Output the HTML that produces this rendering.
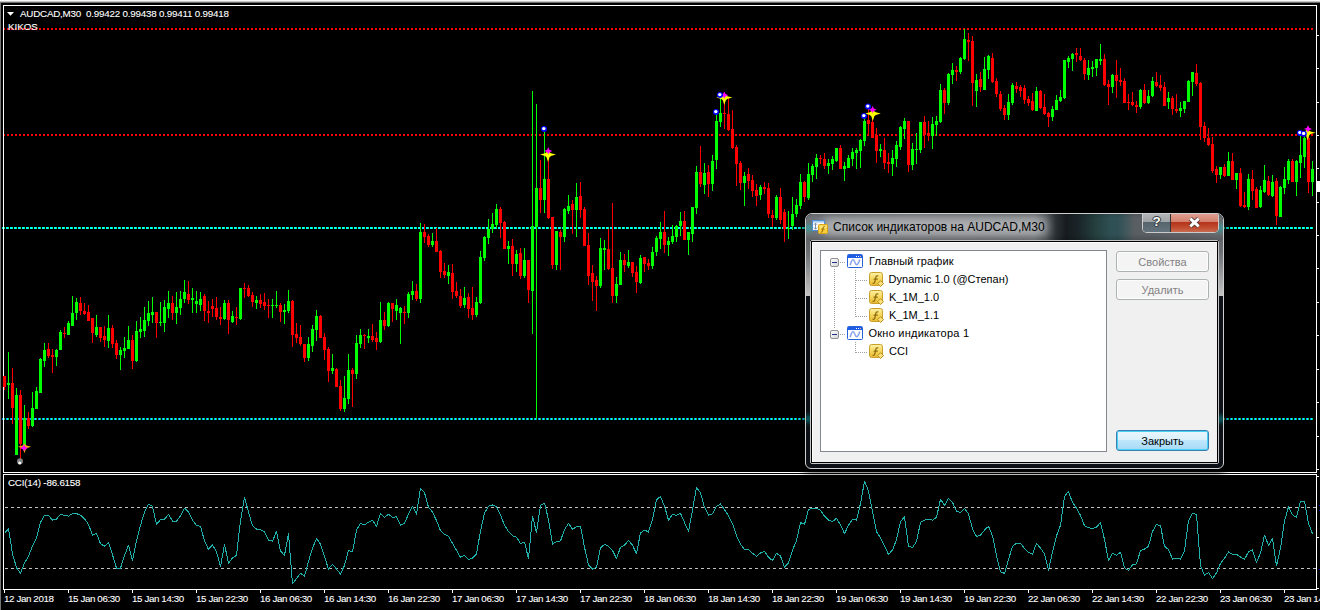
<!DOCTYPE html>
<html><head><meta charset="utf-8"><title>chart</title>
<style>
html,body{margin:0;padding:0;background:#000;}
html{overflow:hidden;width:1320px;height:610px;}
body{width:1320px;height:610px;overflow:hidden;position:relative;font-family:"Liberation Sans",sans-serif;font-size:9.8px;letter-spacing:-0.21px;color:#fff;-webkit-text-stroke:0.1px #fff;}
div{position:absolute;box-sizing:border-box;}
.topbar{left:0;top:0;width:1320px;height:3px;background:linear-gradient(#f6f6f6 0,#f6f6f6 1px,#c4c4c4 1px,#c4c4c4 2px,#6c6c6c 2px,#6c6c6c 3px);}
.leftbar{left:0;top:2px;width:1px;height:608px;background:#747474;}
.frame{border:1px solid #fff;border-right:1px solid #fff;}
.dot{left:2px;width:1311px;height:2px;background-size:4px 2px;background-repeat:repeat-x;}
.dash{left:5px;width:1311px;height:1px;background-image:linear-gradient(90deg,#c0c0c0 0,#c0c0c0 3px,transparent 3px);background-size:6px 1px;}
.tk{top:590px;width:1px;height:3px;background:#fff;}
.tl{top:592.6px;white-space:nowrap;font-size:9.8px;letter-spacing:-0.4px;line-height:12px;color:#fff;}
.rt{left:1317px;width:2px;height:1px;background:#fff;}
.txt{white-space:nowrap;line-height:12px;}
/* dialog */
#dlg{letter-spacing:0;-webkit-text-stroke:0;left:805px;top:213px;width:419px;height:256px;border-radius:7px 7px 6px 6px;background:#0d1117;border:1px solid #cfcfcf;overflow:hidden;box-shadow:0 2px 7px 3px rgba(0,0,0,.6);}
#dlg .glassL,#dlg .glassR{top:26px;width:4px;height:56px;background:linear-gradient(#64686c 0,#6c7074 12px,#c2c2c2 55px);}
#dlg .glassL{left:0} #dlg .glassR{right:0}
#title{left:0;top:0;width:417px;height:26px;overflow:hidden;background:linear-gradient(90deg,#6c7074 0,#74787c 20px,#787c80 120px,#767a7e 228px,#5a5f63 240px,#2a3034 250px,#171b1f 260px,#1a2428 272px,#25403f 290px,#2f5054 305px,#305055 312px,#41585d 320px,#585e62 328px,#5e6266 365px,#686c70 417px);}
#title .glow{left:16px;top:4px;width:226px;height:17px;border-radius:9px;background:rgba(255,255,255,.40);filter:blur(4.5px);}
#title .sh{left:0;top:0;width:417px;height:26px;background:linear-gradient(rgba(0,0,0,.10) 0,rgba(0,0,0,0) 4px,rgba(0,0,0,0) 20px,rgba(0,0,0,.16) 26px);}
.tg{width:9px;height:8px;border-radius:4px;background:rgba(0,215,215,.38);filter:blur(2px);}
#ttext{left:27.1px;top:6px;font-size:12.03px;line-height:14px;color:#000;white-space:nowrap;}
#capbtn{left:336px;top:-1px;width:77px;height:20px;border:1px solid rgba(255,255,255,.75);border-top:0;border-radius:0 0 5px 5px;overflow:hidden;background:#333;}
#capbtn .cq{left:0;top:0;width:27px;height:19px;background:linear-gradient(#b4b6b8 0,#a0a3a6 9px,#56636b 9px,#64747e 19px);}
#capbtn .cq span{position:absolute;left:0;top:1px;width:27px;text-align:center;font-weight:bold;font-size:13.5px;line-height:16px;color:#fff;text-shadow:0 0 1px #2a2e36,0 0 1px #2a2e36,1px 0 0 #3a3e46,-1px 0 0 #3a3e46,0 1px 0 #3a3e46,0 -1px 0 #3a3e46;}
#capbtn .cx{left:28px;top:0;width:47px;height:19px;background:linear-gradient(#e0a294 0,#d4806c 9px,#b4321a 9px,#c0492c 14px,#c86a50 19px);}
#clientO{left:4px;top:26px;width:409px;height:224px;border:1px solid #c4c4c4;border-radius:2px;}
#client{left:5px;top:27px;width:407px;height:222px;background:#f0f0f0;border:1px solid #000;box-shadow:inset 1px 1px 0 #fff;}
#list{left:8px;top:8px;width:287px;height:202px;background:#fff;border:1px solid #828790;}
.btn{left:304px;width:93px;height:21px;border:1px solid #adb2b5;border-radius:3px;background:#f4f4f4;color:#838383;text-align:center;font-size:11px;line-height:20px;padding-top:0px;box-shadow:inset 0 0 0 1px #fcfcfc;}
.btn.def{border-color:#3c7fb1;background:linear-gradient(#eaf6fd 0,#d9f0fc 50%,#bee6fd 50%,#a7d9f5 100%);color:#000;box-shadow:inset 0 0 0 1px #47d1f5;}
.row{height:18px;white-space:nowrap;font-size:11px;line-height:18px;color:#000;}
.ci{position:absolute;overflow:visible;}
.vd{width:1px;background-image:linear-gradient(#a0a0a0 0,#a0a0a0 1px,transparent 1px);background-size:1px 2px;}
.hd{height:1px;background-image:linear-gradient(90deg,#a0a0a0 0,#a0a0a0 1px,transparent 1px);background-size:2px 1px;}
.exp{width:9px;height:9px;border:1px solid #919191;border-radius:2px;background:linear-gradient(135deg,#fff,#d6d6d6);}
.exp i{position:absolute;left:1px;top:3px;width:5px;height:1px;background:#1e3287;}
</style></head><body>
<div class="topbar"></div><div class="leftbar"></div>
<div class="dot" style="top:28px;background-image:linear-gradient(90deg,transparent 0,transparent 1px,#ff0000 1px,#ff0000 3px,transparent 3px);"></div>
<div class="dot" style="top:134px;background-image:linear-gradient(90deg,transparent 0,transparent 1px,#ff0000 1px,#ff0000 3px,transparent 3px);"></div>
<div class="dot" style="top:227px;background-image:linear-gradient(90deg,#00ffff 0,#00ffff 1px,#00ffff 1px,#00ffff 2px,#00ff80 2px,#00ff80 3px,transparent 3px);"></div>
<div class="dot" style="top:418px;background-image:linear-gradient(90deg,#0090ff 0,#0090ff 1px,#00ffff 1px,#00ffff 2px,#00d060 2px,#00d060 3px,transparent 3px);"></div>
<div class="dash" style="top:507px"></div>
<div class="dash" style="top:568px"></div>
<div class="frame" style="left:3px;top:5px;width:1314px;height:468px;"></div>
<div class="frame" style="left:3px;top:474px;width:1314px;height:116px;"></div>
<svg width="1320" height="610" style="position:absolute;left:0;top:0" shape-rendering="crispEdges">
<path fill="#00ff00" d="M8 352h1V399h-1zM7 383h3V385h-3zM16 388h1V455h-1zM15 395h3V455h-3zM24 405h1V446h-1zM23 418h3V446h-3zM32 392h1V427h-1zM31 408h3V426h-3zM36 387h1V409h-1zM35 391h3V409h-3zM40 358h1V393h-1zM39 359h3V393h-3zM44 343h1V367h-1zM43 350h3V361h-3zM56 349h1V366h-1zM55 350h3V357h-3zM60 330h1V350h-1zM59 332h3V350h-3zM68 321h1V335h-1zM67 323h3V335h-3zM72 296h1V326h-1zM71 313h3V326h-3zM76 298h1V320h-1zM75 302h3V313h-3zM96 315h1V337h-1zM95 327h3V335h-3zM108 315h1V348h-1zM107 328h3V341h-3zM120 347h1V370h-1zM119 350h3V355h-3zM124 337h1V358h-1zM123 348h3V351h-3zM128 326h1V349h-1zM127 340h3V349h-3zM136 321h1V362h-1zM135 331h3V361h-3zM140 317h1V338h-1zM139 329h3V332h-3zM144 307h1V337h-1zM143 320h3V331h-3zM148 301h1V326h-1zM147 313h3V321h-3zM152 297h1V323h-1zM151 312h3V315h-3zM160 302h1V326h-1zM159 322h3V323h-3zM164 300h1V332h-1zM163 307h3V323h-3zM168 291h1V318h-1zM167 303h3V309h-3zM176 292h1V324h-1zM175 307h3V313h-3zM180 291h1V315h-1zM179 299h3V308h-3zM184 280h1V303h-1zM183 292h3V299h-3zM192 288h1V313h-1zM191 298h3V300h-3zM196 291h1V313h-1zM195 301h3V304h-3zM200 292h1V311h-1zM199 299h3V305h-3zM224 300h1V320h-1zM223 303h3V319h-3zM232 311h1V323h-1zM231 316h3V322h-3zM240 288h1V320h-1zM239 288h3V319h-3zM256 296h1V309h-1zM255 300h3V303h-3zM272 299h1V318h-1zM271 305h3V306h-3zM276 291h1V308h-1zM275 305h3V306h-3zM284 304h1V324h-1zM283 310h3V312h-3zM288 290h1V313h-1zM287 301h3V311h-3zM308 337h1V361h-1zM307 344h3V358h-3zM312 325h1V352h-1zM311 329h3V346h-3zM316 310h1V341h-1zM315 316h3V330h-3zM332 354h1V374h-1zM331 368h3V371h-3zM344 376h1V412h-1zM343 398h3V409h-3zM348 354h1V404h-1zM347 370h3V399h-3zM356 335h1V379h-1zM355 343h3V374h-3zM360 329h1V348h-1zM359 335h3V344h-3zM368 329h1V343h-1zM367 336h3V338h-3zM380 302h1V343h-1zM379 320h3V342h-3zM388 302h1V327h-1zM387 303h3V326h-3zM396 299h1V320h-1zM395 305h3V311h-3zM400 307h1V344h-1zM399 308h3V313h-3zM408 292h1V318h-1zM407 294h3V313h-3zM412 281h1V300h-1zM411 291h3V295h-3zM420 223h1V303h-1zM419 232h3V299h-3zM432 233h1V247h-1zM431 241h3V245h-3zM448 265h1V284h-1zM447 272h3V276h-3zM464 287h1V308h-1zM463 298h3V305h-3zM476 297h1V317h-1zM475 302h3V315h-3zM480 251h1V304h-1zM479 257h3V303h-3zM484 236h1V261h-1zM483 237h3V258h-3zM488 219h1V244h-1zM487 229h3V238h-3zM492 213h1V233h-1zM491 224h3V229h-3zM496 204h1V228h-1zM495 209h3V225h-3zM508 241h1V264h-1zM507 246h3V249h-3zM516 250h1V272h-1zM515 254h3V264h-3zM524 248h1V278h-1zM523 260h3V276h-3zM532 91h1V334h-1zM531 226h3V291h-3zM536 104h1V418h-1zM535 188h3V227h-3zM544 130h1V213h-1zM543 179h3V200h-3zM556 231h1V270h-1zM555 231h3V265h-3zM564 208h1V242h-1zM563 209h3V237h-3zM568 195h1V214h-1zM567 206h3V211h-3zM576 183h1V237h-1zM575 197h3V210h-3zM600 238h1V288h-1zM599 248h3V286h-3zM604 240h1V270h-1zM603 248h3V250h-3zM616 277h1V303h-1zM615 284h3V296h-3zM620 252h1V285h-1zM619 260h3V285h-3zM628 250h1V268h-1zM627 262h3V266h-3zM640 255h1V284h-1zM639 258h3V283h-3zM652 247h1V269h-1zM651 252h3V266h-3zM656 236h1V256h-1zM655 238h3V252h-3zM660 222h1V249h-1zM659 232h3V239h-3zM668 237h1V256h-1zM667 241h3V245h-3zM672 225h1V244h-1zM671 236h3V242h-3zM676 225h1V242h-1zM675 226h3V237h-3zM680 212h1V236h-1zM679 221h3V226h-3zM688 232h1V255h-1zM687 232h3V240h-3zM692 207h1V242h-1zM691 207h3V234h-3zM696 166h1V214h-1zM695 172h3V208h-3zM704 163h1V194h-1zM703 173h3V185h-3zM712 155h1V191h-1zM711 161h3V184h-3zM716 112h1V169h-1zM715 121h3V160h-3zM720 95h1V127h-1zM719 113h3V122h-3zM744 172h1V206h-1zM743 176h3V183h-3zM760 185h1V200h-1zM759 187h3V195h-3zM776 195h1V220h-1zM775 197h3V218h-3zM788 211h1V239h-1zM787 228h3V229h-3zM792 197h1V230h-1zM791 214h3V226h-3zM796 199h1V217h-1zM795 205h3V214h-3zM800 174h1V209h-1zM799 182h3V206h-3zM808 163h1V200h-1zM807 174h3V198h-3zM812 164h1V182h-1zM811 166h3V175h-3zM816 154h1V179h-1zM815 158h3V167h-3zM828 159h1V174h-1zM827 163h3V166h-3zM832 156h1V170h-1zM831 159h3V164h-3zM836 148h1V162h-1zM835 148h3V161h-3zM844 162h1V181h-1zM843 166h3V169h-3zM848 155h1V168h-1zM847 158h3V168h-3zM852 148h1V166h-1zM851 152h3V159h-3zM856 148h1V169h-1zM855 150h3V153h-3zM860 139h1V168h-1zM859 140h3V151h-3zM864 118h1V146h-1zM863 121h3V141h-3zM880 144h1V157h-1zM879 149h3V151h-3zM892 150h1V176h-1zM891 158h3V164h-3zM896 141h1V167h-1zM895 145h3V159h-3zM900 126h1V150h-1zM899 127h3V147h-3zM904 118h1V139h-1zM903 121h3V129h-3zM912 143h1V170h-1zM911 149h3V165h-3zM916 133h1V164h-1zM915 149h3V150h-3zM920 122h1V153h-1zM919 122h3V150h-3zM932 117h1V149h-1zM931 124h3V136h-3zM936 116h1V136h-1zM935 121h3V125h-3zM940 84h1V123h-1zM939 90h3V122h-3zM948 73h1V105h-1zM947 74h3V103h-3zM952 63h1V84h-1zM951 70h3V75h-3zM960 57h1V74h-1zM959 58h3V72h-3zM964 29h1V60h-1zM963 39h3V59h-3zM976 74h1V107h-1zM975 80h3V91h-3zM984 57h1V90h-1zM983 69h3V90h-3zM988 55h1V79h-1zM987 56h3V70h-3zM1008 94h1V120h-1zM1007 102h3V115h-3zM1012 83h1V105h-1zM1011 85h3V103h-3zM1036 87h1V111h-1zM1035 91h3V111h-3zM1052 106h1V121h-1zM1051 109h3V117h-3zM1056 95h1V110h-1zM1055 100h3V110h-3zM1060 90h1V102h-1zM1059 97h3V101h-3zM1064 60h1V99h-1zM1063 60h3V98h-3zM1068 56h1V68h-1zM1067 58h3V62h-3zM1072 53h1V71h-1zM1071 54h3V59h-3zM1088 60h1V80h-1zM1087 68h3V75h-3zM1092 61h1V77h-1zM1091 67h3V69h-3zM1096 59h1V76h-1zM1095 59h3V68h-3zM1100 44h1V65h-1zM1099 59h3V61h-3zM1112 74h1V93h-1zM1111 75h3V87h-3zM1140 89h1V109h-1zM1139 90h3V107h-3zM1148 90h1V104h-1zM1147 96h3V103h-3zM1152 77h1V97h-1zM1151 81h3V96h-3zM1168 92h1V109h-1zM1167 98h3V102h-3zM1180 102h1V117h-1zM1179 108h3V111h-3zM1184 101h1V113h-1zM1183 101h3V109h-3zM1188 80h1V102h-1zM1187 81h3V102h-3zM1192 72h1V96h-1zM1191 72h3V82h-3zM1220 167h1V179h-1zM1219 167h3V175h-3zM1228 152h1V176h-1zM1227 161h3V176h-3zM1236 173h1V189h-1zM1235 173h3V180h-3zM1248 174h1V210h-1zM1247 179h3V207h-3zM1260 186h1V208h-1zM1259 190h3V207h-3zM1264 165h1V193h-1zM1263 180h3V192h-3zM1272 175h1V197h-1zM1271 182h3V196h-3zM1280 186h1V217h-1zM1279 187h3V217h-3zM1284 167h1V194h-1zM1283 179h3V188h-3zM1288 159h1V184h-1zM1287 161h3V180h-3zM1296 160h1V196h-1zM1295 161h3V182h-3zM1300 136h1V178h-1zM1299 155h3V163h-3zM1304 133h1V168h-1zM1303 138h3V157h-3zM1312 161h1V196h-1zM1311 169h3V182h-3z"/>
<path fill="#ff0000" d="M4 376h1V390h-1zM3 376h3V387h-3zM12 368h1V424h-1zM11 383h3V408h-3zM20 390h1V462h-1zM19 395h3V444h-3zM28 412h1V429h-1zM27 418h3V426h-3zM48 343h1V358h-1zM47 349h3V356h-3zM52 349h1V373h-1zM51 355h3V357h-3zM64 327h1V338h-1zM63 333h3V334h-3zM80 297h1V315h-1zM79 303h3V311h-3zM84 303h1V315h-1zM83 311h3V314h-3zM88 305h1V321h-1zM87 312h3V321h-3zM92 318h1V343h-1zM91 318h3V333h-3zM100 327h1V342h-1zM99 327h3V338h-3zM104 326h1V347h-1zM103 336h3V340h-3zM112 325h1V348h-1zM111 328h3V344h-3zM116 340h1V359h-1zM115 343h3V355h-3zM132 335h1V369h-1zM131 340h3V361h-3zM156 312h1V338h-1zM155 312h3V323h-3zM172 296h1V320h-1zM171 303h3V313h-3zM188 281h1V304h-1zM187 294h3V300h-3zM204 294h1V321h-1zM203 296h3V311h-3zM208 301h1V323h-1zM207 311h3V313h-3zM212 299h1V317h-1zM211 306h3V309h-3zM216 297h1V320h-1zM215 308h3V317h-3zM220 307h1V325h-1zM219 317h3V319h-3zM228 300h1V334h-1zM227 303h3V320h-3zM236 307h1V325h-1zM235 317h3V318h-3zM244 283h1V298h-1zM243 288h3V289h-3zM248 285h1V297h-1zM247 288h3V296h-3zM252 292h1V307h-1zM251 295h3V302h-3zM260 294h1V308h-1zM259 300h3V304h-3zM264 293h1V310h-1zM263 302h3V306h-3zM268 299h1V318h-1zM267 305h3V306h-3zM280 303h1V322h-1zM279 305h3V312h-3zM292 300h1V347h-1zM291 301h3V335h-3zM296 323h1V343h-1zM295 334h3V338h-3zM300 325h1V346h-1zM299 337h3V344h-3zM304 344h1V362h-1zM303 344h3V358h-3zM320 315h1V338h-1zM319 316h3V338h-3zM324 333h1V360h-1zM323 337h3V350h-3zM328 347h1V382h-1zM327 349h3V371h-3zM336 368h1V387h-1zM335 369h3V387h-3zM340 380h1V411h-1zM339 386h3V409h-3zM352 368h1V407h-1zM351 370h3V374h-3zM364 334h1V349h-1zM363 335h3V336h-3zM372 324h1V342h-1zM371 336h3V340h-3zM376 332h1V350h-1zM375 338h3V342h-3zM384 312h1V330h-1zM383 320h3V326h-3zM392 303h1V322h-1zM391 303h3V309h-3zM404 306h1V324h-1zM403 312h3V313h-3zM416 284h1V301h-1zM415 291h3V299h-3zM424 224h1V243h-1zM423 232h3V237h-3zM428 234h1V247h-1zM427 236h3V245h-3zM436 228h1V252h-1zM435 241h3V252h-3zM440 250h1V278h-1zM439 251h3V272h-3zM444 263h1V278h-1zM443 271h3V275h-3zM452 264h1V299h-1zM451 273h3V292h-3zM456 282h1V298h-1zM455 291h3V296h-3zM460 289h1V308h-1zM459 296h3V306h-3zM468 293h1V318h-1zM467 297h3V309h-3zM472 287h1V320h-1zM471 308h3V315h-3zM500 207h1V238h-1zM499 209h3V223h-3zM504 221h1V249h-1zM503 222h3V249h-3zM512 239h1V276h-1zM511 246h3V264h-3zM520 248h1V279h-1zM519 253h3V276h-3zM528 260h1V303h-1zM527 260h3V290h-3zM540 160h1V213h-1zM539 188h3V200h-3zM548 157h1V219h-1zM547 179h3V218h-3zM552 217h1V269h-1zM551 217h3V265h-3zM560 230h1V270h-1zM559 232h3V237h-3zM572 200h1V234h-1zM571 204h3V210h-3zM580 182h1V218h-1zM579 196h3V210h-3zM584 207h1V246h-1zM583 209h3V246h-3zM588 233h1V285h-1zM587 245h3V276h-3zM592 265h1V301h-1zM591 273h3V282h-3zM596 276h1V311h-1zM595 280h3V286h-3zM608 229h1V270h-1zM607 249h3V269h-3zM612 203h1V303h-1zM611 268h3V296h-3zM624 254h1V272h-1zM623 260h3V265h-3zM632 262h1V277h-1zM631 262h3V273h-3zM636 266h1V293h-1zM635 272h3V282h-3zM644 257h1V272h-1zM643 257h3V264h-3zM648 259h1V270h-1zM647 263h3V266h-3zM664 211h1V253h-1zM663 232h3V245h-3zM684 211h1V240h-1zM683 221h3V240h-3zM700 146h1V187h-1zM699 172h3V184h-3zM708 165h1V197h-1zM707 172h3V184h-3zM724 97h1V129h-1zM723 113h3V114h-3zM728 97h1V131h-1zM727 114h3V130h-3zM732 110h1V149h-1zM731 129h3V148h-3zM736 145h1V186h-1zM735 147h3V164h-3zM740 161h1V190h-1zM739 163h3V183h-3zM748 168h1V189h-1zM747 174h3V181h-3zM752 175h1V197h-1zM751 180h3V191h-3zM756 184h1V206h-1zM755 190h3V196h-3zM764 182h1V194h-1zM763 187h3V189h-3zM768 183h1V218h-1zM767 188h3V214h-3zM772 210h1V227h-1zM771 215h3V218h-3zM780 188h1V224h-1zM779 197h3V220h-3zM784 209h1V242h-1zM783 212h3V229h-3zM804 181h1V202h-1zM803 182h3V197h-3zM820 155h1V164h-1zM819 158h3V159h-3zM824 153h1V169h-1zM823 159h3V166h-3zM840 145h1V169h-1zM839 148h3V169h-3zM868 107h1V136h-1zM867 120h3V124h-3zM872 113h1V138h-1zM871 122h3V138h-3zM876 128h1V163h-1zM875 135h3V151h-3zM884 138h1V169h-1zM883 150h3V163h-3zM888 153h1V173h-1zM887 162h3V164h-3zM908 121h1V172h-1zM907 121h3V165h-3zM924 116h1V148h-1zM923 122h3V135h-3zM928 121h1V141h-1zM927 133h3V136h-3zM944 88h1V114h-1zM943 90h3V103h-3zM956 66h1V81h-1zM955 70h3V72h-3zM968 33h1V61h-1zM967 40h3V42h-3zM972 36h1V106h-1zM971 41h3V83h-3zM980 72h1V92h-1zM979 79h3V87h-3zM992 53h1V83h-1zM991 58h3V82h-3zM996 78h1V97h-1zM995 81h3V94h-3zM1000 91h1V111h-1zM999 94h3V109h-3zM1004 105h1V120h-1zM1003 108h3V115h-3zM1016 82h1V93h-1zM1015 86h3V89h-3zM1020 85h1V97h-1zM1019 87h3V91h-3zM1024 85h1V104h-1zM1023 88h3V100h-3zM1028 96h1V106h-1zM1027 99h3V103h-3zM1032 93h1V111h-1zM1031 101h3V110h-3zM1040 90h1V109h-1zM1039 91h3V108h-3zM1044 94h1V115h-1zM1043 107h3V114h-3zM1048 112h1V127h-1zM1047 113h3V117h-3zM1076 48h1V62h-1zM1075 53h3V55h-3zM1080 48h1V61h-1zM1079 56h3V60h-3zM1084 58h1V80h-1zM1083 60h3V74h-3zM1104 54h1V86h-1zM1103 59h3V85h-3zM1108 80h1V105h-1zM1107 84h3V87h-3zM1116 60h1V98h-1zM1115 75h3V81h-3zM1120 68h1V86h-1zM1119 80h3V82h-3zM1124 78h1V103h-1zM1123 81h3V103h-3zM1128 94h1V110h-1zM1127 102h3V103h-3zM1132 92h1V106h-1zM1131 102h3V105h-3zM1136 101h1V113h-1zM1135 105h3V107h-3zM1144 84h1V104h-1zM1143 90h3V103h-3zM1156 72h1V87h-1zM1155 82h3V86h-3zM1160 75h1V91h-1zM1159 85h3V88h-3zM1164 82h1V106h-1zM1163 87h3V106h-3zM1172 96h1V115h-1zM1171 98h3V109h-3zM1176 94h1V113h-1zM1175 109h3V111h-3zM1196 64h1V86h-1zM1195 73h3V84h-3zM1200 82h1V140h-1zM1199 83h3V127h-3zM1204 122h1V142h-1zM1203 126h3V138h-3zM1208 128h1V146h-1zM1207 138h3V145h-3zM1212 137h1V173h-1zM1211 144h3V171h-3zM1216 166h1V183h-1zM1215 169h3V175h-3zM1224 164h1V177h-1zM1223 167h3V176h-3zM1232 153h1V180h-1zM1231 161h3V180h-3zM1240 168h1V207h-1zM1239 173h3V206h-3zM1244 192h1V208h-1zM1243 205h3V207h-3zM1252 170h1V200h-1zM1251 179h3V191h-3zM1256 187h1V208h-1zM1255 189h3V208h-3zM1268 176h1V196h-1zM1267 181h3V195h-3zM1276 178h1V225h-1zM1275 181h3V216h-3zM1292 159h1V182h-1zM1291 161h3V182h-3zM1308 131h1V193h-1zM1307 138h3V182h-3z"/>
</svg>
<svg width="1320" height="610" style="position:absolute;left:0;top:0">
<polyline fill="none" stroke="#20b2aa" stroke-width="1" shape-rendering="crispEdges" stroke-linejoin="round" points="4.5,533.3 8.5,528.6 12.5,553.8 16.5,567.7 20.5,573.2 24.5,563.0 28.5,556.1 32.5,546.2 36.5,538.3 40.5,522.5 44.5,515.4 48.5,515.4 52.5,520.2 56.5,519.1 60.5,514.3 64.5,515.3 68.5,516.2 72.5,513.5 76.5,513.5 80.5,515.3 84.5,518.7 88.5,524.4 92.5,535.2 96.5,533.5 100.5,543.8 104.5,546.2 108.5,542.4 112.5,554.8 116.5,568.1 120.5,568.1 124.5,555.7 128.5,545.3 132.5,560.5 136.5,540.9 140.5,525.3 144.5,512.0 148.5,504.4 152.5,506.3 156.5,524.4 160.5,519.6 164.5,519.2 168.5,514.3 172.5,521.1 176.5,521.1 180.5,515.8 184.5,508.2 188.5,512.0 192.5,520.2 196.5,525.7 200.5,526.3 204.5,540.9 208.5,549.5 212.5,544.7 216.5,551.9 220.5,566.6 224.5,544.3 228.5,563.4 232.5,557.7 236.5,555.4 240.5,520.6 244.5,497.2 248.5,512.0 252.5,525.7 256.5,529.1 260.5,529.5 264.5,532.0 268.5,540.2 272.5,541.1 276.5,531.4 280.5,551.0 284.5,555.4 288.5,533.5 292.5,583.7 296.5,578.6 300.5,573.2 304.5,576.3 308.5,561.5 312.5,548.1 316.5,538.6 320.5,544.0 324.5,556.7 328.5,569.1 332.5,564.3 336.5,569.1 340.5,574.2 344.5,565.3 348.5,550.4 352.5,551.9 356.5,530.1 360.5,523.4 364.5,525.0 368.5,522.1 372.5,520.2 376.5,526.3 380.5,513.4 384.5,517.3 388.5,514.3 392.5,517.3 396.5,516.8 400.5,525.3 404.5,523.0 408.5,514.3 412.5,506.3 416.5,514.3 420.5,488.3 424.5,492.6 428.5,507.3 432.5,512.0 436.5,520.6 440.5,530.7 444.5,534.5 448.5,536.2 452.5,543.4 456.5,550.4 460.5,557.3 464.5,555.4 468.5,559.6 472.5,558.2 476.5,553.8 480.5,531.0 484.5,513.0 488.5,506.3 492.5,505.0 496.5,506.7 500.5,514.9 504.5,525.3 508.5,531.4 512.5,535.8 516.5,537.3 520.5,543.4 524.5,542.1 528.5,558.6 532.5,516.2 536.5,532.4 540.5,505.4 544.5,503.1 548.5,519.6 552.5,544.3 556.5,541.5 560.5,540.9 564.5,529.5 568.5,523.4 572.5,529.1 576.5,526.9 580.5,526.3 584.5,547.2 588.5,564.9 592.5,569.1 596.5,567.2 600.5,548.1 604.5,544.3 608.5,546.2 612.5,550.4 616.5,558.6 620.5,547.2 624.5,545.3 628.5,540.2 632.5,545.3 636.5,553.5 640.5,532.9 644.5,530.1 648.5,532.0 652.5,519.6 656.5,499.7 660.5,496.4 664.5,506.3 668.5,520.2 672.5,514.3 676.5,515.3 680.5,513.4 684.5,522.5 688.5,531.4 692.5,510.1 696.5,487.3 700.5,493.0 704.5,507.3 708.5,515.3 712.5,513.9 716.5,506.3 720.5,504.0 724.5,509.6 728.5,515.8 732.5,523.8 736.5,535.8 740.5,544.0 744.5,549.5 748.5,549.7 752.5,553.3 756.5,556.3 760.5,552.9 764.5,551.4 768.5,557.3 772.5,560.5 776.5,553.3 780.5,556.1 784.5,567.2 788.5,563.0 792.5,550.0 796.5,540.5 800.5,522.5 804.5,524.4 808.5,509.6 812.5,508.2 816.5,508.2 820.5,510.1 824.5,516.2 828.5,520.2 832.5,521.5 836.5,518.3 840.5,525.0 844.5,533.5 848.5,525.3 852.5,519.2 856.5,520.2 860.5,503.5 864.5,481.2 868.5,491.1 872.5,511.1 876.5,531.6 880.5,537.7 884.5,546.2 888.5,554.4 892.5,550.0 896.5,539.6 900.5,521.5 904.5,516.8 908.5,546.2 912.5,547.6 916.5,541.5 920.5,522.5 924.5,520.2 928.5,519.2 932.5,520.2 936.5,517.3 940.5,499.3 944.5,505.4 948.5,498.3 952.5,502.5 956.5,511.1 960.5,512.6 964.5,508.2 968.5,513.9 972.5,529.1 976.5,536.4 980.5,535.2 984.5,530.1 988.5,526.3 992.5,535.8 996.5,555.7 1000.5,571.9 1004.5,573.4 1008.5,559.6 1012.5,546.2 1016.5,543.4 1020.5,543.4 1024.5,548.5 1028.5,552.3 1032.5,554.2 1036.5,543.4 1040.5,548.1 1044.5,553.8 1048.5,570.4 1052.5,551.9 1056.5,535.8 1060.5,525.3 1064.5,496.4 1068.5,491.5 1072.5,502.5 1076.5,508.2 1080.5,515.3 1084.5,525.7 1088.5,527.6 1092.5,528.6 1096.5,527.2 1100.5,522.5 1104.5,539.6 1108.5,560.5 1112.5,553.3 1116.5,555.4 1120.5,552.3 1124.5,567.7 1128.5,570.6 1132.5,564.7 1136.5,563.9 1140.5,550.6 1144.5,549.1 1148.5,546.2 1152.5,531.4 1156.5,524.4 1160.5,525.7 1164.5,546.2 1168.5,549.5 1172.5,559.2 1176.5,558.2 1180.5,559.2 1184.5,551.0 1188.5,520.6 1192.5,513.4 1196.5,514.3 1200.5,565.6 1204.5,575.3 1208.5,572.5 1212.5,578.6 1216.5,572.9 1220.5,563.4 1224.5,558.2 1228.5,551.9 1232.5,554.4 1236.5,554.4 1240.5,557.1 1244.5,559.2 1248.5,551.9 1252.5,550.0 1256.5,562.4 1260.5,552.9 1264.5,535.2 1268.5,545.3 1272.5,538.6 1276.5,565.8 1280.5,548.1 1284.5,521.1 1288.5,506.7 1292.5,514.9 1296.5,517.3 1300.5,501.0 1304.5,501.0 1308.5,523.6 1312.5,533.7"/>
<polygon fill="#ffff00" points="540.0,154.5 545.0,153.3 546.5,152.3 548.0,150.5 549.5,152.3 551.0,153.3 556.0,154.5 551.0,155.9 549.5,157.3 548.0,162.0 546.5,157.3 545.0,155.9"/><polygon fill="#ff00ff" points="544.3,151.0 547.1,149.8 548.3,147.2 549.5,149.8 552.3,151.0 549.5,152.2 548.3,154.2 547.1,152.2"/><circle cx="544" cy="129" r="3" fill="#0000ff"/><circle cx="543.8" cy="128.6" r="1.7" fill="#ffffff"/><polygon fill="#ffff00" points="716.3,97.5 721.3,96.3 722.8,95.3 724.3,93.5 725.8,95.3 727.3,96.3 732.3,97.5 727.3,98.9 725.8,100.3 724.3,105.0 722.8,100.3 721.3,98.9"/><polygon fill="#ff00ff" points="720.3,95.2 723.1,94.0 724.3,91.4 725.5,94.0 728.3,95.2 725.5,96.4 724.3,98.4 723.1,96.4"/><circle cx="716" cy="112" r="3" fill="#0000ff"/><circle cx="715.8" cy="111.6" r="1.7" fill="#ffffff"/><circle cx="720" cy="95" r="3" fill="#0000ff"/><circle cx="719.8" cy="94.6" r="1.7" fill="#ffffff"/><polygon fill="#ffff00" points="864.8,113.5 869.8,112.3 871.3,111.3 872.8,109.5 874.3,111.3 875.8,112.3 880.8,113.5 875.8,114.9 874.3,116.3 872.8,121.0 871.3,116.3 869.8,114.9"/><polygon fill="#ff00ff" points="868.6,109.8 871.4,108.6 872.6,106.0 873.8,108.6 876.6,109.8 873.8,111.0 872.6,113.0 871.4,111.0"/><circle cx="864" cy="116" r="3" fill="#0000ff"/><circle cx="863.8" cy="115.6" r="1.7" fill="#ffffff"/><circle cx="868" cy="106.5" r="3" fill="#0000ff"/><circle cx="867.8" cy="106.1" r="1.7" fill="#ffffff"/><polygon fill="#ffff00" points="1299.6,132.7 1304.6,131.5 1306.1,130.5 1307.6,128.7 1309.1,130.5 1310.6,131.5 1315.6,132.7 1310.6,134.1 1309.1,135.5 1307.6,140.2 1306.1,135.5 1304.6,134.1"/><polygon fill="#ff00ff" points="1304.0,129.0 1306.8,127.8 1308.0,125.2 1309.2,127.8 1312.0,129.0 1309.2,130.2 1308.0,132.2 1306.8,130.2"/><circle cx="1300" cy="133" r="3" fill="#0000ff"/><circle cx="1299.8" cy="132.6" r="1.7" fill="#ffffff"/><circle cx="1303.8" cy="133.8" r="3" fill="#0000ff"/><circle cx="1303.6" cy="133.4" r="1.7" fill="#ffffff"/><polygon fill="#ffa500" points="17.7,446.8 21.9,445.8 23.2,444.9 24.5,443.4 25.8,444.9 27.1,445.8 31.3,446.8 27.1,448.0 25.8,449.2 24.5,453.2 23.2,449.2 21.9,448.0"/><polygon fill="#ff00ff" points="20.0,448.0 22.8,446.8 24.0,444.2 25.2,446.8 28.0,448.0 25.2,449.2 24.0,451.2 22.8,449.2"/><circle cx="20" cy="461.3" r="3" fill="#808080"/><circle cx="19.7" cy="463" r="1.6" fill="#ffffff"/>
<polygon fill="#fff" points="7,12 14,12 10.5,15.8"/>
</svg>
<div class="txt" style="left:20px;top:7.8px;">AUDCAD,M30&nbsp; 0.99422 0.99438 0.99411 0.99418</div>
<div class="txt" style="left:8px;top:20.6px;letter-spacing:-0.05px;">KIKOS</div>
<div class="txt" style="left:8px;top:477.4px;">CCI(14) -86.6158</div>
<div class="tk" style="left:4px"></div><div class="tl" style="left:4px">12 Jan 2018</div><div class="tk" style="left:68px"></div><div class="tl" style="left:68px">15 Jan 06:30</div><div class="tk" style="left:132px"></div><div class="tl" style="left:132px">15 Jan 14:30</div><div class="tk" style="left:196px"></div><div class="tl" style="left:196px">15 Jan 22:30</div><div class="tk" style="left:260px"></div><div class="tl" style="left:260px">16 Jan 06:30</div><div class="tk" style="left:324px"></div><div class="tl" style="left:324px">16 Jan 14:30</div><div class="tk" style="left:388px"></div><div class="tl" style="left:388px">16 Jan 22:30</div><div class="tk" style="left:452px"></div><div class="tl" style="left:452px">17 Jan 06:30</div><div class="tk" style="left:516px"></div><div class="tl" style="left:516px">17 Jan 14:30</div><div class="tk" style="left:580px"></div><div class="tl" style="left:580px">17 Jan 22:30</div><div class="tk" style="left:644px"></div><div class="tl" style="left:644px">18 Jan 06:30</div><div class="tk" style="left:708px"></div><div class="tl" style="left:708px">18 Jan 14:30</div><div class="tk" style="left:772px"></div><div class="tl" style="left:772px">18 Jan 22:30</div><div class="tk" style="left:836px"></div><div class="tl" style="left:836px">19 Jan 06:30</div><div class="tk" style="left:900px"></div><div class="tl" style="left:900px">19 Jan 14:30</div><div class="tk" style="left:964px"></div><div class="tl" style="left:964px">19 Jan 22:30</div><div class="tk" style="left:1028px"></div><div class="tl" style="left:1028px">22 Jan 06:30</div><div class="tk" style="left:1092px"></div><div class="tl" style="left:1092px">22 Jan 14:30</div><div class="tk" style="left:1156px"></div><div class="tl" style="left:1156px">22 Jan 22:30</div><div class="tk" style="left:1220px"></div><div class="tl" style="left:1220px">23 Jan 06:30</div><div class="tk" style="left:1284px"></div><div class="tl" style="left:1284px">23 Jan 14:30</div>
<div class="rt" style="top:35px"></div><div class="rt" style="top:68px"></div><div class="rt" style="top:102px"></div><div class="rt" style="top:135px"></div><div class="rt" style="top:168px"></div><div class="rt" style="top:202px"></div><div class="rt" style="top:235px"></div><div class="rt" style="top:268px"></div><div class="rt" style="top:302px"></div><div class="rt" style="top:335px"></div><div class="rt" style="top:369px"></div><div class="rt" style="top:402px"></div><div class="rt" style="top:436px"></div><div class="rt" style="top:469px"></div><div class="rt" style="top:476px"></div><div class="rt" style="top:537px"></div><div class="rt" style="top:588px"></div>
<div style="left:1317px;top:181px;width:3px;height:11px;background:#fff;"></div><div style="left:1319px;top:505px;width:1px;height:1px;background:#0000c8"></div><div style="left:1319px;top:510px;width:1px;height:1px;background:#0000c8"></div><div style="left:1319px;top:569px;width:1px;height:1px;background:#0000c8"></div>
<div id="dlg">
  <div id="title"><div class="glow"></div><div class="sh"></div></div>
  <div class="glassL"></div><div class="glassR"></div>
  <div class="tg" style="left:-2px;top:10px"></div><div class="tg" style="left:-2px;top:201px"></div><div class="tg" style="right:-2px;top:10px"></div><div class="tg" style="right:-2px;top:201px"></div>
  <svg id="ticon" width="17" height="16" viewBox="0 0 17 16" style="position:absolute;left:6px;top:6px">
    <rect x="0.5" y="0.5" width="12" height="10" fill="#fbfbfb" stroke="#4f8fd6"/>
    <rect x="1" y="1" width="11" height="1.6" fill="#a9cbef"/>
    <path d="M3.5 3.2v6M2 4.7l1.5-1.5 1.5 1.5M2 7.7l1.5 1.5 1.5-1.5" stroke="#7d8fa8" stroke-width="1" fill="none"/>
    <rect x="6.5" y="4.5" width="9" height="9" rx="1" fill="#f7cf3c" stroke="#d9a514"/>
    <rect x="7.5" y="5.5" width="7" height="3" fill="#fce88c" opacity=".8"/>
    <path d="M8.9 12.1c1.1.3 1.5-.5 1.8-2.2l.4-2c.3-1.2.8-1.5 1.7-1.3M9.5 9.1h2.8" stroke="#a67708" stroke-width="1.1" fill="none"/>
  </svg>
  <div id="ttext">Список индикаторов на AUDCAD,M30</div>
  <div id="capbtn">
    <div class="cq"><span>?</span></div>
    <div class="cx"><svg width="13" height="11" viewBox="0 0 13 11" style="position:absolute;left:17px;top:4px"><path d="M2.3 1.6l8.4 7.8M10.7 1.6l-8.4 7.8" stroke="#4a3436" stroke-width="4.6" fill="none"/><path d="M2.3 1.6l8.4 7.8M10.7 1.6l-8.4 7.8" stroke="#fff" stroke-width="2.9" fill="none"/></svg></div>
  </div>
  <div id="clientO"></div>
  <div id="client">
    <div id="list">
      <!-- tree lines -->
      <div class="vd" style="left:13px;top:18px;height:60px"></div>
      <div class="hd" style="left:19px;top:11px;width:6px"></div>
      <div class="vd" style="left:34px;top:19px;height:47px"></div>
      <div class="hd" style="left:35px;top:29px;width:11px"></div>
      <div class="hd" style="left:35px;top:47px;width:11px"></div>
      <div class="hd" style="left:35px;top:65px;width:11px"></div>
      <div class="hd" style="left:19px;top:83px;width:6px"></div>
      <div class="vd" style="left:34px;top:91px;height:11px"></div>
      <div class="hd" style="left:35px;top:101px;width:11px"></div>
      <div class="exp" style="left:9px;top:7px"><i></i></div>
      <div class="exp" style="left:9px;top:79px"><i></i></div>
      <!-- chart icons -->
      <svg class="ci" style="left:26px;top:3px" width="16" height="14" viewBox="0 0 16 14"><use href="#ichart"/></svg>
      <svg class="ci" style="left:26px;top:75px" width="16" height="14" viewBox="0 0 16 14"><use href="#ichart"/></svg>
      <svg class="ci" style="left:48px;top:21px" width="16" height="16" viewBox="0 0 16 16"><use href="#iind"/></svg>
      <svg class="ci" style="left:48px;top:39px" width="16" height="16" viewBox="0 0 16 16"><use href="#iind"/></svg>
      <svg class="ci" style="left:48px;top:57px" width="16" height="16" viewBox="0 0 16 16"><use href="#iind"/></svg>
      <svg class="ci" style="left:48px;top:93px" width="16" height="16" viewBox="0 0 16 16"><use href="#iind"/></svg>
      <div class="row" style="left:48px;top:1px;letter-spacing:.1px">Главный график</div>
      <div class="row" style="left:67.6px;top:19px">Dynamic 1.0 (@Степан)</div>
      <div class="row" style="left:68px;top:37px">K_1M_1.0</div>
      <div class="row" style="left:68px;top:55px">K_1M_1.1</div>
      <div class="row" style="left:47.5px;top:73px;letter-spacing:.24px">Окно индикатора 1</div>
      <div class="row" style="left:68px;top:91px;letter-spacing:.1px">CCI</div>
    </div>
    <div class="btn" style="top:9px">Свойства</div>
    <div class="btn" style="top:37px">Удалить</div>
    <div class="btn def" style="top:188px">Закрыть</div>
  </div>
</div>
<svg width="0" height="0" style="position:absolute">
  <defs>
    <linearGradient id="gold" x1="0" y1="0" x2="0" y2="1"><stop offset="0" stop-color="#fdf0a4"/><stop offset=".5" stop-color="#f6d75c"/><stop offset="1" stop-color="#e7b730"/></linearGradient>
    <g id="ichart">
      <rect x="0.5" y="0.5" width="15" height="13" rx="1" fill="#fff" stroke="#2763d8"/>
      <rect x="1" y="1" width="14" height="3" fill="#1f5ce6"/>
      <rect x="9" y="2" width="1" height="1" fill="#fff"/><rect x="11" y="2" width="1" height="1" fill="#fff"/><rect x="13" y="2" width="1" height="1" fill="#ffb080"/>
      <path d="M3.2 11.2C4 8 4.8 5.6 6.2 5.8 7.8 6 8 11 9.8 10.8 11.2 10.6 12 7.6 12.8 5.6" stroke="#8aa4ec" stroke-width="1.5" fill="none"/>
    </g>
    <g id="iind">
      <rect x="0.5" y="0.5" width="13" height="13" rx="2.2" fill="url(#gold)" stroke="#c9a02c"/>
      <path d="M3.6 11.2c1.6.5 2.2-.6 2.6-2.8l.5-2.6c.3-1.8 1.2-2.3 2.6-1.9M4.6 7.1h4.2" stroke="#8d6d10" stroke-width="1.25" fill="none"/>
      <path d="M11.6 8.7l2.9 2.9-2.9 2.9-2.9-2.9z" fill="#f9e27c" stroke="#b98d1a" stroke-width="1"/>
    </g>
  </defs>
</svg>

</body></html>
